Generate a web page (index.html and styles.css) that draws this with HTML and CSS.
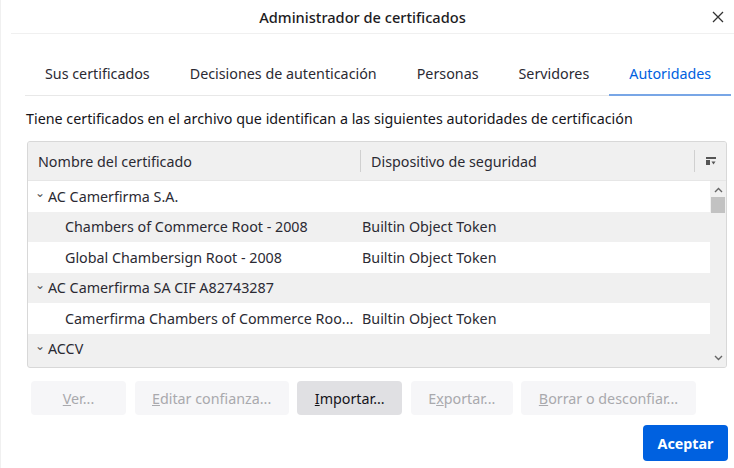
FILE: index.html
```html
<!DOCTYPE html>
<html lang="es">
<head>
<meta charset="utf-8">
<title>Administrador de certificados</title>
<link rel="stylesheet" href="styles.css">
</head>
<body>
<div class="dialog">
  <div class="titlebar">
    <div class="title">Administrador de certificados</div>
    <button class="close" aria-label="Cerrar">
      <svg width="12" height="12" viewBox="0 0 12 12"><path d="M1 1L11 11M11 1L1 11" stroke="#333" stroke-width="1.3" fill="none"/></svg>
    </button>
  </div>
  <div class="tabs">
    <div class="tab">Sus certificados</div>
    <div class="tab">Decisiones de autenticación</div>
    <div class="tab">Personas</div>
    <div class="tab">Servidores</div>
    <div class="tab active">Autoridades</div>
  </div>
  <p class="desc">Tiene certificados en el archivo que identifican a las siguientes autoridades de certificación</p>
  <div class="table">
    <div class="thead">
      <div class="th c1">Nombre del certificado</div>
      <div class="th c2">Dispositivo de seguridad</div>
      <div class="th picker">
        <svg width="10" height="10" viewBox="0 0 10 10"><rect x="0" y="1" width="10" height="2" fill="#555"/><rect x="0" y="4" width="4" height="5" fill="#555"/><path d="M5.5 5.5L9.5 5.5L7.5 8.5Z" fill="#555"/></svg>
      </div>
    </div>
    <div class="tbody">
      <div class="rows">
        <div class="row group"><span class="twisty">&#8964;</span>AC Camerfirma S.A.</div>
        <div class="row alt child"><span class="c1">Chambers of Commerce Root - 2008</span><span class="c2">Builtin Object Token</span></div>
        <div class="row child"><span class="c1">Global Chambersign Root - 2008</span><span class="c2">Builtin Object Token</span></div>
        <div class="row alt group"><span class="twisty">&#8964;</span>AC Camerfirma SA CIF A82743287</div>
        <div class="row child"><span class="c1">Camerfirma Chambers of Commerce Roo...</span><span class="c2">Builtin Object Token</span></div>
        <div class="row alt group"><span class="twisty">&#8964;</span>ACCV</div>
      </div>
      <div class="scrollbar">
        <svg class="arrow" width="9" height="6" viewBox="0 0 9 6"><path d="M1 5L4.5 1.5L8 5" stroke="#666" stroke-width="1.4" fill="none"/></svg>
        <div class="thumb"></div>
        <div class="track"></div>
        <svg class="arrow" width="9" height="6" viewBox="0 0 9 6"><path d="M1 1L4.5 4.5L8 1" stroke="#666" stroke-width="1.4" fill="none"/></svg>
      </div>
    </div>
  </div>
  <div class="actions">
    <button class="btn" disabled><u>V</u>er...</button>
    <button class="btn" disabled><u>E</u>ditar confianza...</button>
    <button class="btn enabled"><u>I</u>mportar...</button>
    <button class="btn" disabled>E<u>x</u>portar...</button>
    <button class="btn" disabled><u>B</u>orrar o desconfiar...</button>
  </div>
  <div class="footer">
    <button class="primary">Aceptar</button>
  </div>
</div>
</body>
</html>
```
FILE: styles.css
```css
html, body {
  margin: 0;
  padding: 0;
  background: #fff;
}
body {
  font-family: "Noto Sans", "Open Sans", sans-serif;
  font-size: 14.3px;
  color: #15141a;
  width: 734px;
  height: 468px;
  overflow: hidden;
}
.dialog {
  height: 468px;
  border-left: 1px solid #f0f0f0;
  box-sizing: border-box;
}
.titlebar {
  height: 33px;
  margin-left: 10px;
  border-bottom: 1px solid #f0f0f0;
  display: flex;
  align-items: center;
  position: relative;
}
.title {
  flex: 1;
  text-align: center;
  padding-right: 20px;
  font-size: 14.6px;
  font-weight: 500;
  color: #1c1b22;
}
.close {
  position: absolute;
  right: 9px;
  top: 10px;
  width: 14px;
  height: 14px;
  padding: 0;
  border: 0;
  background: none;
  display: flex;
  align-items: center;
  justify-content: center;
}
.tabs {
  display: flex;
  margin: 19px 3px 0 24px;
  border-bottom: 1px solid #e8e8e8;
  height: 42px;
  align-items: stretch;
}
.tab {
  flex: none;
  white-space: nowrap;
  padding: 0 20px 1px;
  display: flex;
  align-items: center;
  color: #2b2a33;
  border-bottom: 2px solid transparent;
  margin-bottom: -1px;
}
.tab.active {
  color: #0061e0;
  border-bottom-color: #78a6e6;
}
.desc {
  margin: 13px 0 0 25px;
  line-height: 20px;
  color: #15141a;
  white-space: nowrap;
}
.table {
  margin: 12px 0 0 26px;
  width: 698px;
  border: 1px solid #d8d8d8;
  border-radius: 3px;
  background: #f0f0f0;
  overflow: hidden;
}
.thead {
  display: flex;
  height: 38px;
  align-items: center;
  background: #f0f0f0;
  border-bottom: 1px solid #e6e6e6;
}
.th {
  height: 38px;
  display: flex;
  align-items: center;
  color: #2b2a33;
}
.th.c1 {
  width: 322px;
  padding-left: 10px;
  border-right: 1px solid #d0d0d0;
  height: 22px;
}
.th.c2 {
  flex: 1;
  padding-left: 10px;
  border-right: 1px solid #d0d0d0;
  height: 22px;
}
.th.picker {
  width: 31px;
  justify-content: center;
}
.tbody {
  display: flex;
  height: 186px;
}
.rows {
  flex: 1;
  min-width: 0;
}
.row {
  height: 30.5px;
  display: flex;
  align-items: center;
  background: #fff;
  white-space: nowrap;
  color: #2b2a33;
}
.row.alt {
  background: #f0f0f0;
}
.row.group {
  padding-left: 7px;
}
.twisty {
  display: inline-block;
  width: 13px;
  font-size: 12px;
  line-height: 10px;
  margin-top: -6px;
  color: #555;
}
.row.child .c1 {
  width: 296px;
  padding-left: 37px;
}
.row.child .c2 {
  padding-left: 1px;
}
.scrollbar {
  width: 16px;
  flex: none;
  display: flex;
  flex-direction: column;
  align-items: center;
  background: #f0f0f0;
}
.arrow {
  margin: 6px 0 4px;
}
.scrollbar .arrow:last-child {
  margin: 4px 0 6px;
}
.thumb {
  width: 14px;
  height: 16px;
  background: #c2c2c2;
}
.track {
  flex: 1;
}
.actions {
  display: flex;
  gap: 8.5px;
  margin: 13px 0 0 30px;
}
.btn {
  height: 34px;
  min-width: 95px;
  padding: 0 17.5px;
  border: 0;
  border-radius: 4px;
  font-family: inherit;
  font-size: 14.3px;
  background: #f6f6f8;
  color: #a9a9ad;
  white-space: nowrap;
}
.btn.enabled {
  background: #e0e0e3;
  color: #15141a;
}
.footer {
  display: flex;
  justify-content: flex-end;
  margin: 10px 6px 0 0;
}
.primary {
  height: 36px;
  width: 85px;
  border: 0;
  border-radius: 4px;
  background: #0061e0;
  color: #fff;
  font-family: inherit;
  font-size: 14.3px;
  font-weight: 700;
}
```
